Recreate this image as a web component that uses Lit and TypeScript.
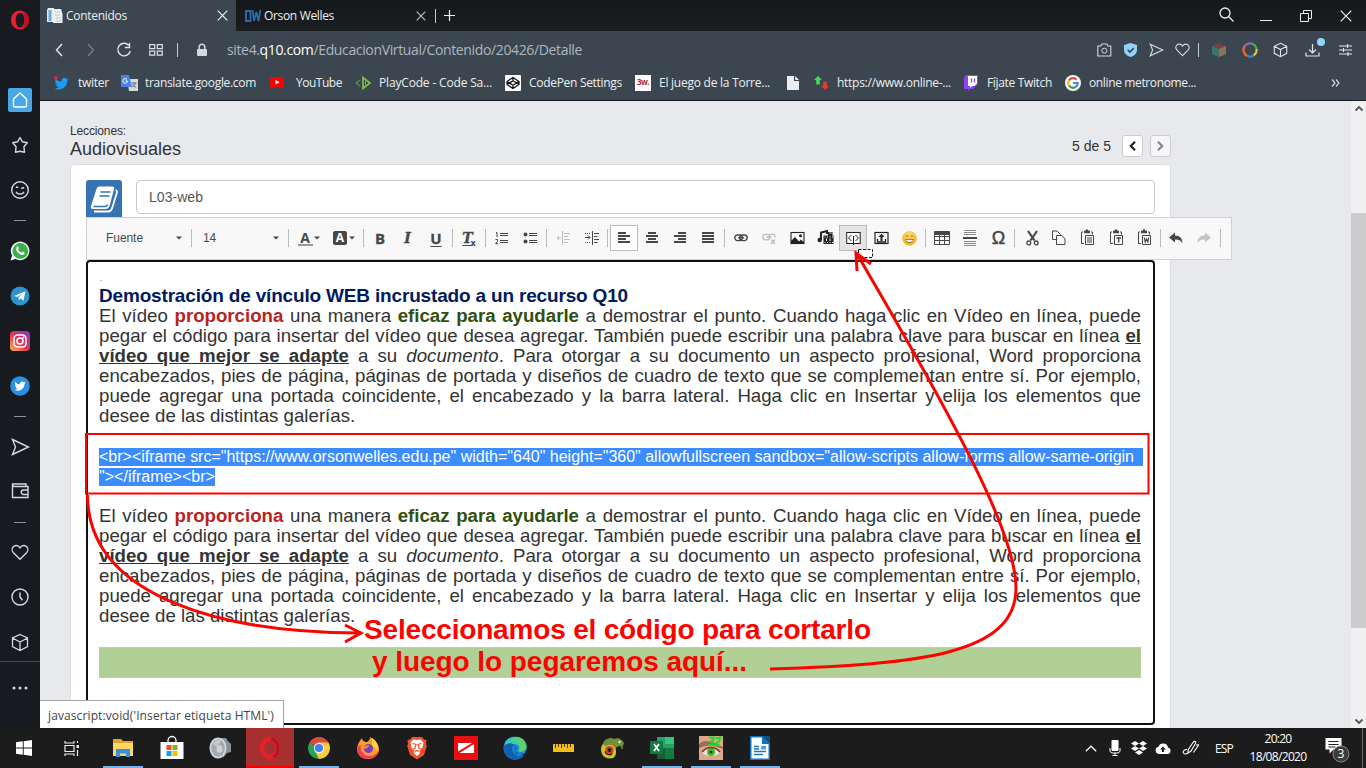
import { LitElement, html, svg, css, TemplateResult } from "lit";
import { customElement } from "lit/decorators.js";

type Item = [number, number, unknown];

// Icon with its own coordinate box; size equals the box.
const ic = (w: number, h: number, body: unknown) =>
  html`<svg class="ic" width=${w} height=${h} viewBox="0 0 ${w} ${h}" fill="none">${body}</svg>`;

// Text spaced out to a known width.
const fit = (text: string | TemplateResult, w: number, cls = "") =>
  html`<span class="fit ${cls}" data-w=${w}>${text}</span>`;

// Flex items with gaps computed from each item's centre and size.
const flow = (origin: number, items: Item[], vertical = false) => {
  let end = origin;
  return items.map(([c, s, node]) => {
    const gap = c - s / 2 - end;
    end = c + s / 2;
    return vertical
      ? html`<div class="cell" style="margin-top:${gap}px;height:${s}px">${node}</div>`
      : html`<div class="cell" style="margin-left:${gap}px;width:${s}px">${node}</div>`;
  });
};
// Text item described by left edge and width.
const tx = (x: number, w: number, t: string | TemplateResult, cls = ""): Item => [x + w / 2, w, fit(t, w, cls)];

const L = "#d5d9dd";
const K = "#474747";
const bird = svg`<path d="M14.5 3.2c-.5.3-1 .4-1.6.5.6-.4 1-.9 1.200-1.500-.5.300-1.100.5-1.700.7A2.900 2.900 0 0 0 7.400 5.600 8.200 8.200 0 0 1 1.500 2.500c-.8 1.400-.4 3 .9 3.900-.5 0-.9-.1-1.300-.4 0 1.500 1 2.700 2.300 3-.4.100-.8.100-1.300 0 .4 1.200 1.500 2 2.700 2A5.800 5.800 0 0 1 .6 12.200 8.200 8.200 0 0 0 13.100 4.800c.6-.4 1-.9 1.400-1.600z"/>`;
const heart = svg`<path d="M8 14.500 2.200 8.600A3.700 3.700 0 0 1 2 3.400c1.500-1.600 4-1.500 5.300.100L8 4.400l.7-.9c1.300-1.600 3.800-1.700 5.300-.100a3.700 3.700 0 0 1-.2 5.200z"/>`;
const cube = svg`<path d="M9 1.500 16.500 5v8.500L9 17.500 1.500 13.500V5zM1.500 5 9 9l7.500-4M9 9v8.500"/>`;
const send = svg`<path d="M1.500 1.500 17.500 9l-16 7.500L4.500 9z"/>`;
const dash = html`<div class="dash"></div>`;

const side: Item[] = [
  [20, 20, ic(20, 20, svg`<path fill-rule="evenodd" fill="#ed1c2e" d="M10 .5C4.800.5 1 4.800 1 10s3.800 9.500 9 9.500 9-4.300 9-9.500S15.200.5 10 .5zm0 2.200c2.600 0 4.300 3.200 4.300 7.300s-1.700 7.300-4.300 7.300S5.700 14.100 5.700 10 7.400 2.700 10 2.700z"/><path fill="#a80d1e" d="M12 1c5 1.500 7 5 7 9s-2 7.500-7 9c1.500-2 2.300-5 2.300-9S13.500 3 12 1z" opacity=".7"/>`)],
  [100, 24, ic(24, 24, svg`<rect width="24" height="24" rx="2" fill="#48a7e6"/><path d="M5.500 11 12 5l6.500 6v6.500a1.500 1.500 0 0 1-1.500 1.500H7a1.500 1.500 0 0 1-1.500-1.500z" stroke="#fff" stroke-width="1.400"/>`)],
  [145, 18, ic(18, 18, svg`<path d="m9 1.500 2.300 4.200 5 1.100-3.400 3.900.6 5.500L9 15.300l-4.500.9.600-5.500L1.700 6.800l5-1.100z" stroke=${L} stroke-width="1.400" stroke-linejoin="round"/>`)],
  [190, 20, ic(20, 20, svg`<circle cx="10" cy="10" r="8.300" stroke=${L} stroke-width="1.400"/><path d="M6 11.800c1.500 3 6.500 3 8 0M11.200 8.500l3-1M5.800 7.300h2.500" stroke=${L} stroke-width="1.500"/>`)],
  [220, 1, dash],
  [251, 20, ic(20, 20, svg`<path d="M.5 19.500 2 14.500A9.300 9.300 0 1 1 5.500 18z" fill="#f2f5f2"/><circle cx="10.300" cy="9.900" r="7.800" fill="#36b24a"/><path d="M6.500 6c.7-1.300 1.500-1 2 .3.5 1.200.2 1.500-.4 2.200.8 1.600 1.800 2.500 3.300 3.200.7-1 1-1.200 2-.6 1.400.7 1.500 1 .9 1.900-1.300 2-4 1-6-.9C6.500 10.300 5.600 8 6.500 6z" fill="#fff"/>`)],
  [296, 20, ic(20, 20, svg`<circle cx="10" cy="10" r="9.500" fill="#2f92cf"/><path d="m4 10 11.500-4.700-2 9.500-3-2.200-1.600 1.600-.4-2.800 4.500-4-5.500 3.600z" fill="#f3f8fb"/>`)],
  [341, 20, ic(20, 20, svg`<defs><linearGradient id="ig" x1="0" y1="1" x2="1" y2="0"><stop stop-color="#fcc14e"/><stop offset=".45" stop-color="#e8344f"/><stop offset="1" stop-color="#7b38c8"/></linearGradient></defs><rect width="20" height="20" rx="4" fill="url(#ig)"/><rect x="4" y="4" width="12" height="12" rx="3.500" stroke="#fff" stroke-width="1.500"/><circle cx="10" cy="10" r="3" stroke="#fff" stroke-width="1.500"/><circle cx="13.500" cy="6.500" r=".9" fill="#fff"/>`)],
  [386, 20, ic(20, 20, svg`<circle cx="10" cy="10" r="9.800" fill="#2a8fe0"/><g transform="translate(4 4) scale(.8)" fill="#fff">${bird}</g>`)],
  [416, 1, dash],
  [447, 19, ic(19, 18, svg`<g stroke=${L} stroke-width="1.400">${send}</g>`)],
  [491, 18, ic(18, 18, svg`<path d="M1.500 2v13.500H17V4.500H3.500A2 2 0 0 1 1.500 2H15v2.500M17 8h-4.500a2 2 0 0 0 0 4.500H17" stroke=${L} stroke-width="1.400"/>`)],
  [522, 1, dash],
  [552, 18, html`<svg class="ic" width="18" height="18" viewBox="0 0 16 16" fill="none" stroke=${L} stroke-width="1.200">${heart}</svg>`],
  [597, 18, ic(18, 18, svg`<circle cx="9" cy="9" r="8" stroke=${L} stroke-width="1.400"/><path d="M9 4.500V9l2.500 3.200" stroke=${L} stroke-width="1.400"/>`)],
  [642, 19, ic(18, 19, svg`<g stroke=${L} stroke-width="1.300">${cube}</g>`)],
  [661.5, 1, html`<div class="sideline"></div>`],
  [688, 6, ic(16, 4, svg`<g fill=${L}><circle cx="2" cy="2" r="1.500"/><circle cx="8" cy="2" r="1.500"/><circle cx="14" cy="2" r="1.500"/></g>`)],
];

const X = (c: string, s = 11) => ic(s, s, svg`<path d="M.7.7 ${s - 0.7} ${s - 0.7}M${s - 0.7}.7.7 ${s - 0.7}" stroke=${c} stroke-width="1.200"/>`);

const addr: Item[] = [
  [59, 8, ic(8, 14, svg`<path d="M7 1 1.500 7 7 13" stroke="#e6e9ec" stroke-width="1.400"/>`)],
  [91, 8, ic(8, 14, svg`<path d="m1 1 5.500 6L1 13" stroke="#77818b" stroke-width="1.300"/>`)],
  [124, 16, ic(16, 16, svg`<path d="M12.700 3.200A6.300 6.300 0 1 0 14.300 9M13.500.8v4.700H8.800" stroke="#e1e5e8" stroke-width="1.400"/>`)],
  [155.500, 14, ic(14, 12, svg`<path d="M.7.7h5v4h-5zM8.300.7h5v4h-5zM.7 7.200h5v4h-5zM8.300 7.200h5v4h-5z" stroke="#dde1e5" stroke-width="1.200"/>`)],
  [177.500, 1, html`<div class="vline"></div>`],
  [202, 10, ic(10, 14, svg`<rect y="6" width="10" height="7" rx="1" fill="#d3d8dc"/><path d="M2.200 6V4a2.800 2.800 0 0 1 5.600 0v2" stroke="#d3d8dc" stroke-width="1.500"/>`)],
  tx(227, 355, html`site4.<b class="dom">q10.com</b>/EducacionVirtual/Contenido/20426/Detalle`, "url"),
  [1104, 15, ic(15, 14, svg`<path d="M.8 3h3l1-2h5l1 2h3v10H.8z" stroke=${L} stroke-width="1.100"/><circle cx="7.400" cy="7.700" r="2.500" stroke=${L}/>`)],
  [1130, 13, ic(13, 14, svg`<path d="M6.500 0 13 2v5c0 3.500-3 6-6.500 7C3 13 0 10.500 0 7V2z" fill="#93d2f7"/><path d="m3.700 6.800 2.200 2.200 3.800-3.900" stroke="#37444f" stroke-width="1.600"/>`)],
  [1156.5, 15, html`<svg class="ic" width="15" height="14" viewBox="0 0 19 18" fill="none" stroke=${L} stroke-width="1.500">${send}</svg>`],
  [1182, 15, html`<svg class="ic" width="15" height="15" viewBox="0 0 16 16" fill="none" stroke=${L} stroke-width="1.200">${heart}</svg>`],
  [1198.500, 1, html`<div class="vline"></div>`],
  [1219, 14, ic(14, 14, svg`<path d="m7 0 7 3-7 3-7-3z" fill="#803b4b"/><path d="M0 3l7 3v8l-7-3z" fill="#3d7469"/><path d="m14 3-7 3v8l7-3z" fill="#877659"/>`)],
  [1250, 16, ic(16, 16, svg`<g stroke-width="2.200"><path d="M3.300 3.300A6.600 6.600 0 0 1 9 1.500" stroke="#9066cf"/><path d="M9 1.500a6.600 6.600 0 0 1 5.500 5.500" stroke="#4caf50"/><path d="M14.500 7a6.600 6.600 0 0 1-3 6.500" stroke="#ffc31d"/><path d="M11.500 13.500a6.600 6.600 0 0 1-6 .500" stroke="#238fd9"/><path d="M5.500 14A6.600 6.600 0 0 1 3.300 3.300" stroke="#f0642c"/></g>`)],
  [1280.500, 15, html`<svg class="ic" width="15" height="16" viewBox="0 0 18 19" fill="none" stroke="#e1e5e8" stroke-width="1.300">${cube}</svg>`],
  [1315, 20, ic(20, 24, svg`<path d="M7.500 6v9M4 11.500 7.500 15l3.500-3.500M1 14.500V18h13v-3.500" stroke="#e1e5e8" stroke-width="1.200"/><circle cx="16" cy="4" r="4" fill="#93d6fb"/>`)],
  [1345, 13, ic(13, 12, svg`<path d="M0 2h13M0 6h13M0 10h13M8.500 0v4M4.500 4v4M9 8v4" stroke="#e1e5e8" stroke-width="1.100"/>`)],
];

const marks: Item[] = [
  [61.500, 15, ic(15, 14, svg`<g fill="#1d9bf0">${bird}</g><circle cx="1.800" cy="1.800" r="1.800" fill="#e0245e"/>`)],
  tx(78, 31, "twiter"),
  [129, 17, ic(17, 16, svg`<path d="M6 4h11v12H8z" fill="#d5d9dd"/><path d="M0 0h8l3 12H0z" fill="#4d82e8"/><path d="M6 4.500A2.300 2.300 0 1 0 6.500 6H4.500" stroke="#fff"/><path d="M10.500 8h5M13 7v1M14.500 8c-.5 2-2 3.500-3.500 4M11.500 9c.8 1.500 2 2.500 3.500 3.500" stroke="#66727e"/>`)],
  tx(145, 111, "translate.google.com"),
  [277, 14, ic(14, 11, svg`<rect width="14" height="10.500" rx="2" fill="#f00"/><path d="m5.500 3 4 2.300-4 2.300z" fill="#fff"/>`)],
  tx(296, 46, "YouTube"),
  [363, 17, ic(17, 14, svg`<path d="M5 4 1.200 7 5 10" stroke="#5d9440" stroke-width="1.300"/><path d="M8 1.500v11L15 7z" stroke="#7fbd42" stroke-width="1.800"/><path d="M10.500 5v4" stroke="#7fbd42"/>`)],
  tx(379, 113, "PlayCode - Code Sa..."),
  [513, 16, ic(16, 16, svg`<rect width="16" height="16" rx="1" fill="#fff"/><path d="m8 2.500 6 4v3l-6 4-6-4v-3zM2 6.500l6 3.800 6-3.800M2 9.500 8 5.700l6 3.800M8 2.500v3.200M8 10.300v3.200" stroke="#111" stroke-width="1.300"/>`)],
  tx(529, 93, "CodePen Settings"),
  [643, 16, html`<div class="tw">3w.</div>`],
  tx(659, 111, "El juego de la Torre..."),
  [793, 12, ic(12, 14, svg`<path d="M0 0h7v5h5v9H0zM8.200 0 12 4H8.200z" fill="#eceef0"/>`)],
  [821, 15, ic(15, 16, svg`<path d="M4 1 8 5H5.800v4.500H2.200V5H0z" fill="#3fdc52"/><path d="M11 15 7 11h2.200V6.500h3.600V11H15z" fill="#e23b34"/>`)],
  tx(837, 114, "https://www.online-..."),
  [971, 14, ic(14, 16, svg`<path d="M2 0h12v9l-5 5H6l-2 2v-2H0V3z" fill="#8b45f0"/><path d="M4 1h9v7.500L10.500 11H8l-2 2v-2H4z" fill="#fff"/><path d="M7.500 3.500v4M10.500 3.500v4" stroke="#8b45f0" stroke-width="1.300"/>`)],
  tx(987, 65, "Fíjate Twitch"),
  [1073, 16, ic(16, 16, svg`<circle cx="8" cy="8" r="8" fill="#fff"/><g stroke-width="2.200"><path d="M11.500 4.700A4.700 4.700 0 0 0 4 5.500" stroke="#ea4335"/><path d="M4 5.500a4.700 4.700 0 0 0 0 5" stroke="#fbbc05"/><path d="M4 10.500a4.700 4.700 0 0 0 7 1.200" stroke="#34a853"/><path d="M11 11.700A4.500 4.500 0 0 0 12.700 8H8" stroke="#4285f4"/></g>`)],
  tx(1089, 107, "online metronome..."),
  [1335.5, 9, ic(9, 8, svg`<path d="m1 .5 3 3.500-3 3.500M5 .5 8 4 5 7.500" stroke="#d5dade" stroke-width="1.200"/>`)],
];

const sep = html`<div class="tsep"></div>`;
const caret = ic(6, 4, svg`<path d="M0 .5h6L3 3.500z" fill=${K}/>`);
const lines = (a: number[][]) => ic(14, 14, svg`${a.map(([x, w], i) => svg`<rect x=${x} y=${1 + i * 3} width=${w} height="2" fill=${K}/>`)}`);
const clip = (inner: unknown) => ic(15, 16, svg`<path d="M3 2H1.500v11.500H4M11 2h1.500v2.500" stroke=${K}/><path d="M4 .8h1.500a1.500 1.500 0 0 1 3 0H10v2.500H4z" fill=${K}/><path d="M5.500 5.500h8v9h-8z" stroke=${K}/>${inner}`);

const tools: Item[] = [
  tx(106, 37, "Fuente", "tool"), [179, 6, caret], [191.500, 1, sep],
  tx(203, 13, "14", "tool"), [276, 6, caret], [288.500, 1, sep],
  [305, 14, html`<div class="ta">A</div>`], [317, 6, caret],
  [340, 14, html`<div class="tb">A</div>`], [352, 6, caret],
  [363.500, 1, sep],
  [380, 14, html`<b class="let">B</b>`], [407.5, 14, html`<b class="let it">I</b>`], [436, 14, html`<b class="let un">U</b>`],
  [452.500, 1, sep],
  [469, 16, html`<b class="let it un">T</b><span class="sub">x</span>`],
  [485.500, 1, sep],
  [502, 14, ic(14, 14, svg`<path d="M5 2.500h8M5 4.500h8M5 9.500h8M5 11.500h8" stroke=${K}/><path d="M1 1.500h1V6M.5 8.500h2v2L.5 12.500h2.500" stroke=${K}/>`)],
  [530.5, 15, ic(15, 14, svg`<path d="M6 2.500h8M6 4.500h8M6 9.500h8M6 11.500h8" stroke=${K}/><circle cx="2.500" cy="3.500" r="2" fill=${K}/><circle cx="2.500" cy="10.500" r="2" fill=${K}/>`)],
  [546.5, 1, sep],
  [563.5, 15, ic(15, 14, svg`<path d="M6.500 0v14M8 2.500h6M8 5.500h4M8 8.500h6M8 11.500h4M1 7h4M3 5 1 7l2 2" stroke="#bcbcbc"/>`)],
  [591.5, 15, ic(15, 14, svg`<path d="M8.500 0v14M10 2.500h5M10 5.500h3.500M10 8.500h5M10 11.500h3.500M1 6.500h5M4 4.500l2 2-2 2" stroke=${K}/><path d="M1 2.500h6M1 11.500h6" stroke=${K} stroke-dasharray="1 1"/>`)],
  [607.5, 1, sep],
  [624, 28, html`<div class="press">${lines([[1, 8], [1, 12], [1, 8], [1, 12]])}</div>`],
  [652, 14, lines([[3, 8], [1, 12], [3, 8], [1, 12]])],
  [680, 14, lines([[5, 8], [1, 12], [5, 8], [1, 12]])],
  [708, 14, lines([[1, 12], [1, 12], [1, 12], [1, 12]])],
  [724.500, 1, sep],
  [741, 14, ic(14, 8, svg`<rect x=".8" y="1" width="7.600" height="5.600" rx="2.800" stroke=${K} stroke-width="1.400"/><rect x="5.600" y="1" width="7.600" height="5.600" rx="2.800" stroke=${K} stroke-width="1.400"/><path d="M4 3.800h6" stroke=${K} stroke-width="1.300"/>`)],
  [769, 14, ic(14, 14, svg`<g stroke="#bcbcbc" stroke-width="1.300"><rect x=".8" y="3.300" width="7" height="5.500" rx="2.700"/><path d="M7.500 3.300h3a2.700 2.700 0 0 1 2.700 3M4.500 6h5M9 8.500l4 4.500M13 8.500 9 13"/></g>`)],
  [797, 15, ic(15, 14, svg`<rect x="1" y="1.500" width="13" height="11" stroke="#222" stroke-width="1.100"/><path d="M1 12.500V10l4-4 4 4.500 2-2 3 3v1z" fill="#222"/><circle cx="10.500" cy="4.800" r="1.500" fill="#222"/>`)],
  [825.500, 17, ic(17, 16, svg`<path d="M4 10V2.500L10 1v3" stroke="#222" stroke-width="2"/><circle cx="2.700" cy="10" r="2.200" fill="#222"/><path d="M11 2h4.500v3.500H11zM6.500 5.500h10V14h-10z" fill="#222"/><path d="M7.500 7h9M7.500 12.500h9" stroke="#f8f8f8" stroke-dasharray="1 1.500"/><path d="M9.500 8.500v2.500M13 8.500v2.500M12.500 3h2" stroke="#f8f8f8"/>`)],
  [853, 28, html`<div class="press on">${ic(15, 14, svg`<rect x=".7" y="1.500" width="13.500" height="11" fill="#fff" stroke="#222"/><path d="M5.500 4 2.500 7l3 3M9.500 4l3 3-3 3" stroke="#222"/><path d="M7.500 5v9" stroke="#222"/>`)}</div>`],
  [881, 15, ic(15, 14, svg`<rect x="1" y="1.500" width="13" height="11" stroke="#222" stroke-width="1.200"/><path d="M7.500 2.800 10.500 6H8.500v4H6.500V6h-2z" fill="#222"/><path d="M3.500 8v3h8V8" stroke="#222" stroke-width="1.300"/>`)],
  [909, 15, ic(15, 15, svg`<circle cx="7.500" cy="7.500" r="7.200" fill="#f7b92c"/><circle cx="7.500" cy="5.800" r="5.200" fill="#fcd35c"/><path d="M3.500 8.300h8c0 4.200-8 4.200-8 0z" fill="#fff" stroke="#9e6c15"/><path d="M4 5.500c.5-1 1.500-1 2 0M9 5.500c.5-1 1.500-1 2 0" stroke="#65481e"/>`)],
  [925, 1, sep],
  [942, 16, ic(16, 14, svg`<path d="M.5.500h15v13H.500zM.5 5.500h15M.5 9.500h15M5.500 3v10M10.500 3v10" stroke=${K}/><path d="M.5.500h15v3.500H.500z" fill=${K}/>`)],
  [970, 14, ic(14, 16, svg`<path d="M1 .5h12M1 2.500h12M1 4.500h12M1 11.500h12M1 13.500h12M1 15.500h12" stroke="#8a8a8a"/><path d="M0 8h14" stroke=${K} stroke-width="2"/>`)],
  [998.500, 14, html`<span class="omega">Ω</span>`],
  [1014.500, 1, sep],
  [1032, 13, ic(13, 15, svg`<path d="M2 0 8.500 9.500M11 0 4.500 9.500" stroke=${K} stroke-width="2.200"/><circle cx="2.800" cy="11.900" r="1.900" stroke=${K} stroke-width="1.300"/><circle cx="10.200" cy="11.900" r="1.900" stroke=${K} stroke-width="1.300"/>`)],
  [1058.500, 15, ic(15, 16, svg`<path d="M5 9.500H1.500V1h4.500l3.500 3.500" stroke=${K}/><path d="M5.500 5.500H11L14 9v5.500H5.500z" stroke=${K} fill="#f8f8f8"/>`)],
  [1087.500, 15, clip(svg`<path d="M7 8h5M7 10h5M7 12h5" stroke=${K}/>`)],
  [1116, 15, clip(svg`<path d="M7.500 8h4.500M9.700 8v4.500" stroke=${K} stroke-width="1.300"/>`)],
  [1144.500, 15, clip(svg`<path d="m7.300 7.500.9 4.500 1.300-3 1.300 3 .9-4.500" stroke=${K} stroke-width="1.200"/>`)],
  [1160, 1, sep],
  [1176, 14, ic(14, 12, svg`<path d="M6 .5v3c5 0 7.500 3 7.500 7.500C11.500 8.500 10 7.500 6 7.500v3L0 5.500z" fill=${K}/>`)],
  [1204, 14, ic(14, 12, svg`<path d="M8 .5v3C3 3.500.5 6 .5 11 2.500 8.500 4 7.500 8 7.500v3l6-5z" fill="#c4c4c4"/>`)],
  [1220.500, 1, sep],
];

const para = () => html`<div class="para">
  <div class="jl">El vídeo <b class="red">proporciona</b> una manera <b class="green">eficaz para ayudarle</b> a demostrar el punto. Cuando haga clic en Vídeo en línea, puede</div>
  <div class="jl">pegar el código para insertar del vídeo que desea agregar. También puede escribir una palabra clave para buscar en línea <b class="ul">el</b></div>
  <div class="jl"><b class="ul">vídeo que mejor se adapte</b> a su <i>documento</i>. Para otorgar a su documento un aspecto profesional, Word proporciona</div>
  <div class="jl">encabezados, pies de página, páginas de portada y diseños de cuadro de texto que se complementan entre sí. Por ejemplo,</div>
  <div class="jl">puede agregar una portada coincidente, el encabezado y la barra lateral. Haga clic en Insertar y elija los elementos que</div>
  <div>desee de las distintas galerías.</div>
</div>`;

const task = (icon: unknown, cls = "") => html`<div class="task ${cls}">${icon}</div>`;
const tasks: Item[] = [
  [24, 48, task(ic(16, 16, svg`<path d="M0 2.300 6.800 1.300v6.200H0zM7.700 1.200 16 0v7.500H7.700zM0 8.400h6.800v6.300L0 13.700zM7.700 8.400H16V16l-8.300-1.200z" fill="#fff"/>`))],
  [72, 48, task(ic(16, 15, svg`<path d="M1 0v2h9V0M1 15v-2h9v2M1 4.500h9v6H1zM13.500 0v2M13.500 9v6" stroke="#eee" stroke-width="1.200"/><rect x="12.500" y="4" width="2.500" height="3" fill="#eee"/>`))],
  [123, 40, task(ic(22, 20, svg`<path d="M1 1h8l2 2h10v15H1z" fill="#e2a32b"/><path d="M1 5h20v13H1z" fill="#fbd768"/><path d="M4 19v-8h14v8h-4v-3.500H8V19z" fill="#3a8fdc"/>`), "run")],
  [171.500, 30, task(ic(24, 24, svg`<path d="M8 6V4.500a4 4 0 0 1 8 0V6" stroke="#fff" stroke-width="1.300"/><path d="M.5 6h23v17H.5z" fill="#fff"/><path d="M6.500 9h5v5h-5z" fill="#f25022"/><path d="M12.500 9h5v5h-5z" fill="#7fba00"/><path d="M6.500 15h5v5h-5z" fill="#00a4ef"/><path d="M12.500 15h5v5h-5z" fill="#ffb900"/>`))],
  [220, 30, task(ic(22, 22, svg`<path d="M10 1h7l2 3 3 3v8l-4 1-4 5z" fill="#8a9097"/><ellipse cx="9" cy="11" rx="8.500" ry="10.500" fill="#d4d9dd"/><ellipse cx="9" cy="11" rx="6.800" ry="8.800" fill="#a3aab0"/><ellipse cx="10.500" cy="12" rx="3" ry="3.800" fill="#cdd3d7"/><path d="M4 7c2-4 5-5 8-3L8 10z" fill="#c4cacf"/>`))],
  [270, 48, task(ic(22, 24, svg`<ellipse cx="11" cy="12" rx="8" ry="9" stroke="#e3212b" stroke-width="4.500"/><path d="M12 3c9 1 9 16 2 17.500" stroke="#b8121d" stroke-width="3"/>`), "opera")],
  [319, 40, task(ic(22, 22, svg`<path d="M11 11 1.500 5.500A11 11 0 0 1 20.500 5.500z" fill="#de4b3d"/><path d="M11 11 1.500 5.500A11 11 0 0 0 11 22z" fill="#28a256"/><path d="M11 11 20.500 5.500A11 11 0 0 1 11 22z" fill="#fbcc3c"/><path d="M11 11 20.500 5.500H11zM11 11l-5 2.500L11 22l4.500-8z" fill="#fbcc3c"/><path d="M11 22 1.500 5.500 7 13z" fill="#28a256"/><circle cx="11" cy="11" r="5.200" fill="#f3f6f8"/><circle cx="11" cy="11" r="4.100" fill="#3f82ec"/>`), "run")],
  [368, 40, task(ic(22, 22, svg`<path d="M5 1c0 3 3 4 5 4 2-1 3-3 3-5 5 3 9 7 9 12 0 6-5 10-11 10S0 18 0 12c0-4 2-7 5-11z" fill="#ff9b2a"/><path d="M0 12c0 6 5 10 11 10s10-4 11-9c-3 6-10 8-15 4C4 15 3 12 4 8 1 9 0 10 0 12z" fill="#ee3d5a"/><circle cx="11.500" cy="11.500" r="4.500" fill="#7341c9"/><path d="M15 1c5 3 7 8 5 14-1-4-3-5-5-7z" fill="#ffd53a"/><path d="M5 8c3 1 5 1 7 0 0 3-3 3-4 4z" fill="#ff8d23"/>`))],
  [417, 30, task(ic(20, 22, svg`<path d="M5 0h10l2 2.500 2.500.5-.5 4 .8 2-2.800 9L10 22.500 3 18 .2 9 1 7 .5 3 3 2.500z" fill="#f4512b"/><path d="m10 3 3.500-.5 3 3-1 5-3 3 .5 3-3 2.500-3-2.500.5-3-3-3-1-5 3-3z" fill="#fff"/><path d="m5.500 6.500 3.500 1-1 3M14.500 6.500l-3.500 1 1 3M8 14.500l2-1 2 1M6.500 11.500h2M11.500 11.500h2" stroke="#f4512b" stroke-width="1.300"/>`))],
  [466, 30, task(ic(24, 24, svg`<rect width="24" height="24" fill="#ed0d10"/><path d="M4 7h14L4 15.500zM20 8v9H5.500z" fill="#fff"/>`))],
  [515, 30, task(ic(24, 24, svg`<circle cx="12" cy="12" r="11.500" fill="#1683d6"/><path d="M2 7C6-2 22-1 23.500 10c.5 5-5 7-9 5 3-3 1-7-3-7-4-.500-8 1-9.500 3z" fill="#3bc8b4"/><path d="M13 1c7 0 10.500 5 10.500 9s-4 6-7 5.500c2-5 0-10-9-12z" fill="#64d45f" opacity=".8"/><path d="M.5 12C2 7 8 6 11 9c-3 2-3 9 4 11 3 1 6-1 7-3-3 8-14 9-19 2z" fill="#1260ad"/><path d="M13.500 10c-2.500 2-2 6 2 8 3 1 5 .5 7-.5l-1 2-8-2c-2-2-2-5 0-7.500z" fill="#1b1b1b"/>`))],
  [564, 30, task(ic(22, 9, svg`<rect width="21" height="8" rx=".5" fill="#f3bd1a"/><path d="M2.500 0v4M5.500 0v3M8.500 0v4M11.500 0v3M14.500 0v4M17.500 0v3" stroke="#4e3d0e"/>`))],
  [612.500, 30, task(ic(24, 22, svg`<path d="M1 11C1 2 9-1 13 2c4-2 8 0 10 4l-1 3-6 .5-2 3-6-4z" fill="#738e3b"/><path d="M3 8c-3 5-1 12 6 12 5 0 6-7 2-10-4-2-7 1-6 4" stroke="#c9c52d" stroke-width="3.200"/><circle cx="8.500" cy="13" r="3" stroke="#e43c22" stroke-width="2.200" fill="#1b1b1b"/><path d="M21 9v3M16 8v2" stroke="#738e3b" stroke-width="1.500"/><circle cx="18.500" cy="5" r="1.300" fill="#dfe7bd"/>`))],
  [662, 40, task(ic(24, 22, svg`<path d="M7 0h17v22H7z" fill="#21a366"/><path d="M15 0h9v7h-9z" fill="#33c481"/><path d="M7 11h8v11H7z" fill="#185c37"/><path d="M15 11h9v11h-9z" fill="#107c41"/><rect y="4" width="13" height="13" rx="1" fill="#107c41"/><path d="m4 7 5 7M9 7l-5 7" stroke="#fff" stroke-width="1.700"/>`), "run")],
  [711, 40, task(ic(24, 24, svg`<path d="M0 0h24v24H0z" fill="#dca88c"/><path d="M0 8C6 2 14 6 24 11v2C14 9 8 9 0 12z" fill="#a06d55"/><path d="M3 17c5-6 13-6 18 0-5 4-13 4-18 0z" fill="#e3e9d8"/><circle cx="12" cy="16" r="4" fill="#50b72f"/><circle cx="12" cy="16" r="1.500" fill="#153b11"/><path d="M3 16c5-6 13-6 18 0" stroke="#6a3f2e" stroke-width="1.500"/><path d="M10 1.500h5l-1 3h-2 2L13 9H9M16.500 2.500 21.500 1.500l-1 3.500-5 4h5" stroke="#13df25" stroke-width="1.900"/>`), "run")],
  [760, 40, task(ic(20, 24, svg`<path d="M0 0h13l7 7v17H0z" fill="#1471ba"/><path d="M1.500 1.500H12V8h6.500v14.500h-17z" fill="#fff"/><path d="M13 0h7v7z" fill="#0b4f85"/><path d="M4 10.500h5M4 13h5M4 15.500h12M4 18.500h9" stroke="#1878bd" stroke-width="1.300"/><path d="M11 10h5v3.500h-5z" fill="#4ba4dd"/>`), "run")],
  [1091, 14, ic(12, 7, svg`<path d="m.8 6.200 5.200-5 5.200 5" stroke="#fff" stroke-width="1.200"/>`)],
  [1114.500, 12, ic(12, 16, svg`<rect x="2.500" width="7" height="11" rx="1" fill="#fff"/><path d="M1 8v3.500l2 1.500h6l2-1.500V8M6 13v2.500M3.500 15.500h5" stroke="#fff"/>`)],
  [1139, 16, ic(16, 14, svg`<path d="m4 0 4 2.500L4 5 0 2.500zM12 0l4 2.500L12 5 8 2.500zM4 5l4 2.500L4 10 0 7.500zM12 5l4 2.500-4 2.500-4-2.500zM8 9l4 2.500L8 14l-4-2.500z" fill="#fff"/>`)],
  [1163, 16, ic(16, 11, svg`<path d="M4 11a3.700 3.700 0 0 1-.5-7.300A5 5 0 0 1 13 4.500 3.300 3.300 0 0 1 12.500 11z" fill="#fff"/><path d="m8 3.500 3 3H9V9H7V6.500H5z" fill="#222"/>`)],
  [1190.500, 17, ic(17, 16, svg`<path d="M6 10 11 2.500c1.500-2 3.500-1 2.500 1L9 11 6 13zM14 5c3 0 3-1 2 1l-4.500 6.500M5 9.500c-4-.5-5 4-2 4.500 1.500 0 2-1 3-1" stroke="#fff" stroke-width="1.100"/>`)],
  tx(1215, 18, "ESP", "tray"),
  [1278, 60, html`<div class="clock">${fit("20:20", 27, "tray")}${fit("18/08/2020", 57, "tray")}</div>`],
  [1337, 26, html`<div class="note">${ic(26, 26, svg`<path d="M1.500 3h16v11.500h-8l-4 4v-4h-4z" fill="#fff"/><path d="M4.500 6.500h10M4.500 9.500h10M4.500 12h7" stroke="#222" stroke-width="1.200"/><circle cx="17" cy="19" r="8" fill="#3b3b3b" stroke="#888"/>`)}<span class="badge">3</span></div>`],
  [1362.500, 1, html`<div class="peek"></div>`],
];

@customElement("app-root")
export class AppRoot extends LitElement {
  static styles = css`
    * { box-sizing: border-box; }
    :host { display: grid; grid-template: 728px 40px / 40px 1326px; width: 1366px; height: 768px; overflow: hidden; position: relative; font-family: "Liberation Sans", Arial, sans-serif; color: #333; }
    .ic { display: block; flex: none; overflow: visible; }
    .fit { white-space: nowrap; display: inline-block; flex: none; }
    .cell { flex: none; display: flex; align-items: center; justify-content: center; }
    .side { background: #171b20; display: flex; flex-direction: column; }
    .dash { width: 12px; height: 1px; background: #8d9399; }
    .sideline { width: 40px; height: 1px; background: #42484e; }
    .main { display: grid; grid-template-rows: 31px 37px 33px 627px; min-width: 0; background: #3b4650; font-family: "Open Sans", "Noto Sans", sans-serif; font-size: 12px; color: #eceff1; }
    .row { display: flex; align-items: center; }
    .row > .cell { height: 100%; }
    .tabs { background: linear-gradient(#15181b, #1b1e21); }
    .tab { width: 196px; height: 31px; background: #3b4650; display: flex; align-items: center; }
    .vline { width: 1px; height: 14px; background: #c3c9cf; }
    .url { font-size: 14px; color: #aeb7c0; }
    .dom { font-weight: 400; color: #fff; }
    .marks { border-bottom: 1px solid #171b20; padding-bottom: 3px; }
    .tw { width: 16px; height: 16px; background: #fff; color: #b3262c; font: bold 8px/14px "Open Sans", sans-serif; text-align: center; letter-spacing: -.5px; }
    .page { display: grid; grid-template-columns: 1311px 15px; background: #e8e9ed; font-family: "Liberation Sans", Arial, sans-serif; color: #333; overflow: hidden; }
    .scroll { background: #f0f0f0; display: flex; flex-direction: column; align-items: center; padding-top: 5px; }
    .thumb { width: 15px; height: 415px; margin: 102px 0 91px; background: #cdcdcd; }
    .body { padding: 23px 0 0 30px; }
    .head { display: flex; width: 1101px; height: 40px; justify-content: space-between; }
    .titles { display: flex; flex-direction: column; }
    .small { font-size: 12px; line-height: 14px; height: 15px; }
    .big { font-size: 18px; line-height: 21px; }
    .pager { display: flex; align-items: center; font-size: 14px; padding-top: 4px; height: 40px; }
    .pg { width: 21px; height: 22px; border: 1px solid #ccc; border-radius: 3px; background: #fff; display: grid; place-items: center; margin-left: 11px; }
    .pg.off { margin-left: 7px; background: #f6f6f8; }
    .card { width: 1101px; height: 600px; background: #fff; border: 1px solid #dcdde1; border-radius: 4px; padding: 15px 0 0 15px; }
    .top { display: flex; gap: 14px; height: 37px; }
    .book { width: 36px; height: 37px; border-radius: 3px 3px 0 0; background: #3673b3; display: grid; place-items: center; }
    .input { width: 1019px; height: 34px; border: 1px solid #c8c8c8; border-radius: 4px; padding-left: 12px; display: flex; align-items: center; font-size: 14px; color: #555; }
    .bar { width: 1146px; height: 43px; border: 1px solid #d1d1d1; background: #f8f8f8; display: flex; align-items: center; padding-bottom: 1px; position: relative; }
    .tool { font-size: 12px; color: #484848; }
    .tsep { width: 1px; height: 18px; background: #bcbcbc; }
    .ta { font: bold 14px/13px "Open Sans", sans-serif; color: #474747; border-bottom: 2px solid #999; width: 15px; text-align: center; flex: none; margin-top: 1px; }
    .tb { font: bold 12px/14px "Open Sans", sans-serif; color: #fff; background: #474747; width: 14px; height: 14px; border-radius: 2px; text-align: center; }
    .let { font: bold 15px/15px "Open Sans", sans-serif; color: #474747; -webkit-text-stroke: .3px #474747; }
    .it { font-family: "DejaVu Serif", serif; font-style: italic; font-size: 14px; }
    .un { text-decoration: underline; text-underline-offset: 2px; text-decoration-thickness: 1px; }
    .sub { font: bold 9px/9px "Open Sans", sans-serif; color: #474747; margin-top: 9px; margin-left: -2px; }
    .press { width: 28px; height: 26px; border: 1px solid #bcbcbc; background: #fff; display: grid; place-items: center; flex: none; }
    .on { background: #e4e4e4; }
    .omega { font: 18px/17px "Liberation Sans", sans-serif; color: #474747; -webkit-text-stroke: .5px #474747; }
    .edit { width: 1069px; height: 465px; border: 2px solid #111; border-radius: 4px; padding: 18px 12px 0 11px; font-size: 18.67px; line-height: 20px; }
    .tick { width: 2px; height: 1px; margin-left: 1px; background: #b9bdc6; }
    .h { color: #011a5e; font-weight: 700; height: 20px; margin-top: 5px; font-size: 19px; }
    .para { height: 120px; }
    .jl { text-align: justify; text-align-last: justify; white-space: nowrap; height: 20px; width: 1042px; }
    .red { color: #b9231d; }
    .green { color: #30500f; }
    .ul { text-decoration: underline; }
    .code { margin: 21px 0 19px; height: 40px; font-size: 16px; display: flex; flex-direction: column; align-items: flex-start; }
    .sel { background: #3a8cff; color: #fff; line-height: 18px; height: 18px; margin: 1px 0; white-space: pre; }
    .wide { width: 1044px; flex: none; }
    .paste { width: 1042px; height: 31px; margin-top: 21px; background: #b1d095; border: 1px dotted #c6cdbf; }
    .status { position: absolute; left: 40px; top: 700px; width: 244px; height: 28px; background: #fff; border: 1px solid #a5a5a5; border-width: 1px 1px 0 0; padding: 6px 0 0 8px; font: 12px/17px "Open Sans", sans-serif; color: #444; }
    .notes { position: absolute; left: 0; top: 0; pointer-events: none; }
    .say { font: bold 28px "Liberation Sans", Arial, sans-serif; }
    .taskbar { grid-column: 1 / 3; background: #1c1c1c; color: #fff; font-family: "Open Sans", sans-serif; font-size: 12px; }
    .task { width: 100%; height: 40px; display: grid; place-items: center; border-bottom: 2px solid transparent; padding-top: 2px; }
    .run { border-color: #76b3ee; }
    .opera { background: #a5302f; border-color: #f40000; }
    .clock { display: flex; flex-direction: column; align-items: center; line-height: 18px; }
    .note { position: relative; }
    .badge { position: absolute; left: 13px; top: 11px; width: 8px; text-align: center; line-height: 16px; font-size: 12px; }
    .peek { width: 1px; height: 40px; background: #6b6b6b; }
  `;

  firstUpdated() {
    this.renderRoot.querySelectorAll<HTMLElement>(".fit").forEach((el) => {
      const n = (el.textContent || "").length;
      const d = Number(el.dataset.w) - el.getBoundingClientRect().width;
      el.style.letterSpacing = `${d / n}px`;
    });
  }

  render() {
    return html`
      <div class="side">${flow(0, side, true)}</div>
      <div class="main">
        <div class="row tabs">
          <div class="tab">${flow(40, [
            [55, 16, ic(16, 16, svg`<path d="M1 0h6v14H0V2z" fill="#e5edf3"/><path d="M1.500 2h3v11h-3z" fill="#6aa9d6"/><path d="M6 1h8l1.500 5v9H6z" fill="#edf0f2"/><path d="M8 4h5M8 7h5M9 10h5M9 13h5" stroke="#bfc6cb"/>`)],
            tx(66, 61, "Contenidos"), [222.500, 11, X("#eceff1")],
          ])}</div>
          ${flow(236, [
            [253, 16, ic(16, 12, svg`<rect x="1" y="1" width="4.500" height="10" stroke="#2d6fae" stroke-width="1.800"/><path d="m7.500 0 1.500 11 2.300-9 2.200 9L15.300 0" stroke="#2d6fae" stroke-width="1.700"/>`)],
            tx(264, 70, "Orson Welles"), [420.500, 10, X("#b9bec3", 10)],
            [435.500, 1, html`<div class="vline"></div>`],
            [449.500, 11, ic(11, 11, svg`<path d="M5.500 0v11M0 5.500h11" stroke="#eee" stroke-width="1.200"/>`)],
            [1226, 15, ic(15, 15, svg`<circle cx="6" cy="5" r="5" stroke="#eee" stroke-width="1.300"/><path d="m9.500 8.500 5 5" stroke="#eee" stroke-width="1.300"/>`)],
            [1266, 12, ic(12, 11, svg`<path d="M0 10.500h12" stroke="#eee"/>`)],
            [1306, 12, ic(12, 12, svg`<path d="M3.500 3V.500h8v8H9M.5 3.500h8v8h-8z" stroke="#eee"/>`)],
            [1346, 12, X("#eee", 12)],
          ])}
        </div>
        <div class="row">${flow(40, addr)}</div>
        <div class="row marks">${flow(40, marks)}</div>
        <div class="page">
          <div class="body">
            <div class="head">
              <div class="titles">
                <div class="small">${fit("Lecciones:", 56)}</div>
                <div class="big">${fit("Audiovisuales", 111)}</div>
              </div>
              <div class="pager">${fit("5 de 5", 39)}
                <div class="pg">${ic(7, 10, svg`<path d="M6 .8 1.800 5 6 9.200" stroke="#222" stroke-width="2.200"/>`)}</div>
                <div class="pg off">${ic(7, 10, svg`<path d="M1 .8 5.200 5 1 9.200" stroke="#888" stroke-width="2.200"/>`)}</div>
              </div>
            </div>
            <div class="card">
              <div class="top">
                <div class="book">${ic(30, 28, svg`<path d="M10 1.500h13q3 0 2 3L20.500 21q-1 3-4 3H4q-3 0-2-3L7.500 4q.5-2.500 2.500-2.500z" fill="#fff"/><path d="M26.500 5q2 .5 1.300 3L23 23.500q-1 3-4 3H5" stroke="#fff" stroke-width="1.800"/><path d="M11.500 7h10M10.500 11h10M4.500 21.500h11.500q1.800 0 2.500-2" stroke="#3673b3" stroke-width="1.600"/>`)}</div>
                <div class="input">${fit("L03-web", 54)}</div>
              </div>
              <div class="bar">${flow(87, tools)}</div>
              <div class="edit">
                <div class="tick"></div>
                <div class="h">${fit("Demostración de vínculo WEB incrustado a un recurso Q10", 529)}</div>
                ${para()}
                <div class="code">
                  <div class="sel wide">${fit(`<br><iframe src="https://www.orsonwelles.edu.pe" width="640" height="360" allowfullscreen sandbox="allow-scripts allow-forms allow-same-origin`, 1035)}</div>
                  <div class="sel">${fit(`"></iframe><br>`, 116)}</div>
                </div>
                ${para()}
                <div class="paste"></div>
              </div>
            </div>
          </div>
          <div class="scroll">
            ${ic(8, 5, svg`<path d="M.5 4.500 4 1l3.500 3.500" stroke="#555" stroke-width="1.800"/>`)}
            <div class="thumb"></div>
            ${ic(8, 5, svg`<path d="M.5.500 4 4 7.500.5" stroke="#555" stroke-width="1.800"/>`)}
          </div>
        </div>
      </div>
      <div class="row taskbar">${flow(0, tasks)}</div>
      <div class="status">${fit("javascript:void('Insertar etiqueta HTML')", 226)}</div>
      <svg class="notes" width="1366" height="768" viewBox="0 0 1366 768" fill="none">
        <rect x="858.5" y="249.5" width="14" height="8" fill="#fff" stroke="#111" stroke-dasharray="3 1.500"/>
        <g stroke="#fb0400" stroke-width="3">
          <rect x="86" y="434" width="1062.500" height="59.500" stroke-width="2"/>
          <path d="M87.500 495C88 600 230 633 360 633M345 625l16 8-16 9"/>
          <path d="M770 669C920 664 1016 655 1016 588 1016 535 960 430 857 254M857 271l-1-18 15 11"/>
        </g>
        <g fill="#fb0400" class="say">
          <text x="364" y="639" textLength="507">Seleccionamos el código para cortarlo</text>
          <text x="372" y="671" textLength="375">y luego lo pegaremos aquí...</text>
        </g>
      </svg>`;
  }
}
